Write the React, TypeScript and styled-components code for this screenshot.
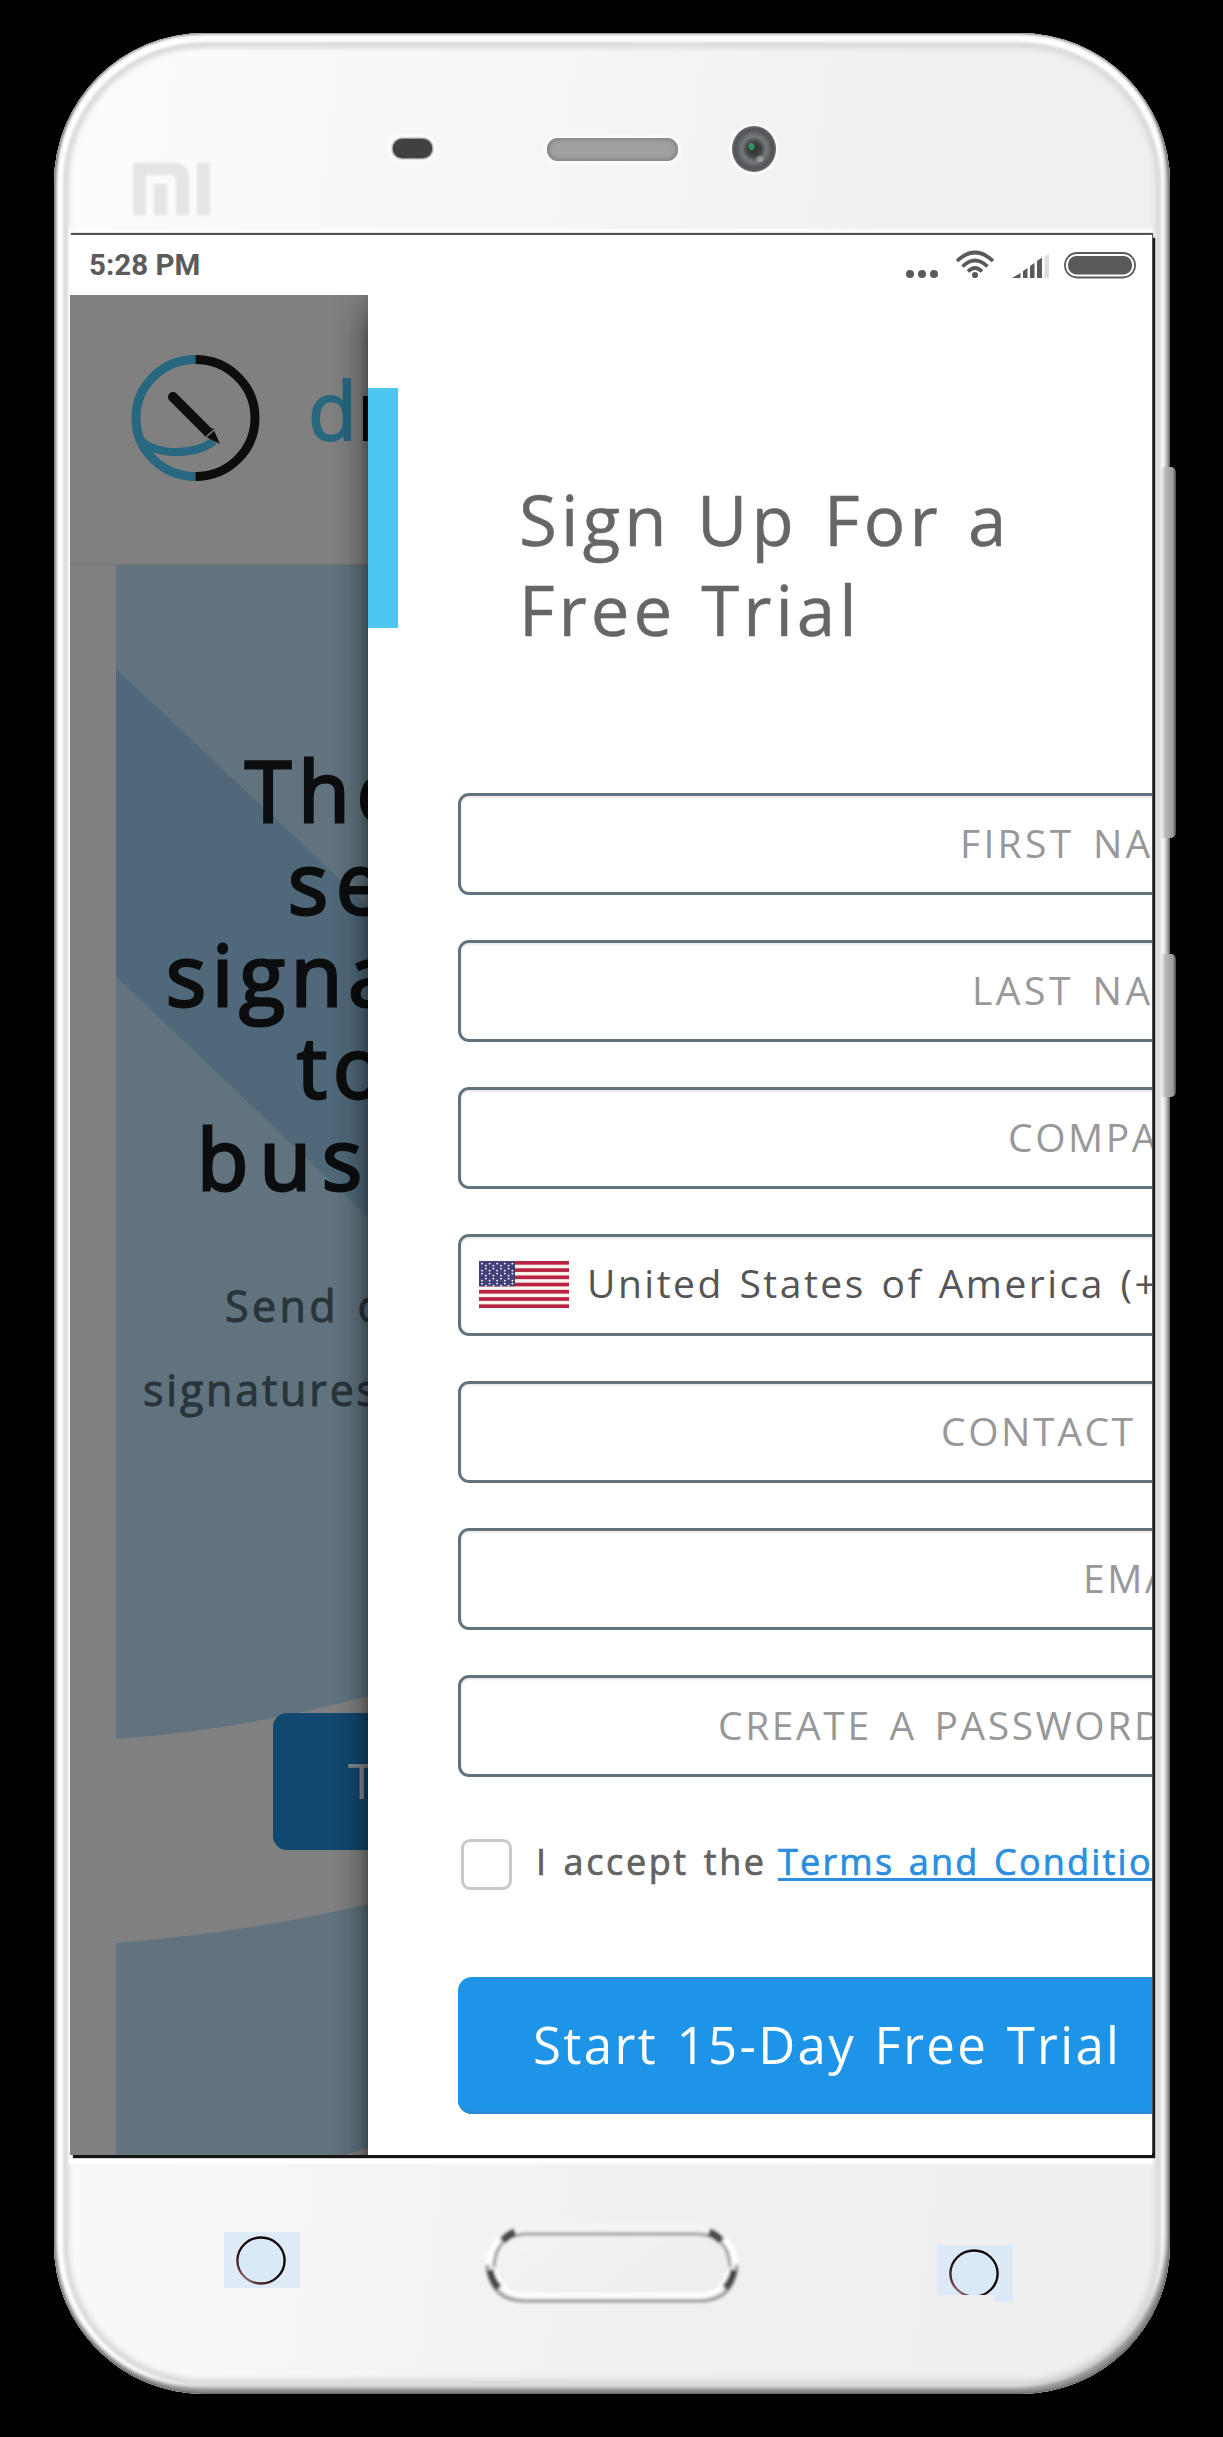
import React from "react";
import styled, { createGlobalStyle } from "styled-components";

const GlobalStyle = createGlobalStyle`
  *, *::before, *::after { box-sizing: border-box; }
  body { margin: 0; background: #000; font-family: "Open Sans", "Noto Sans", sans-serif; }
`;

const Stage = styled.main`
  display: flex;
  justify-content: flex-start;
  width: 1223px;
  height: 2437px;
  padding: 33px 0 0 54px;
  background: #000;
  overflow: hidden;
`;

const Phone = styled.div`
  position: relative;
  display: flex;
  flex-direction: column;
  width: 1116px;
  height: 2361px;
  border-radius: 150px;
  background: linear-gradient(97deg, #fcfcfc 0%, #f6f6f6 35%, #f0f0f0 62%, #efefef 100%);
  box-shadow:
    inset 0 0 3px 1px rgba(70, 70, 70, 0.75),
    inset -5px -8px 4px -1px #939393,
    inset 3px -3px 3px 0 #bdbdbd,
    inset 0 0 3px 9px #fff,
    inset 0 0 5px 15px #dadada;
`;

const SideKey = styled.span<{ $top: number; $height: number }>`
  position: absolute;
  right: -6px;
  top: ${(p) => p.$top}px;
  width: 15px;
  height: ${(p) => p.$height}px;
  border-radius: 0 5px 5px 0;
  background: linear-gradient(90deg, rgba(190, 190, 190, 0), #b4b4b4 35%, #9c9c9c 80%, #444);
`;

const TopBezel = styled.header`
  display: flex;
  align-items: flex-start;
  height: 202px;
  padding: 105px 0 0 79px;
`;

const BrandMark = styled.svg`
  width: 77px;
  height: 52px;
  margin-top: 25px;
  filter: blur(0.8px);
`;

const Sensor = styled.span`
  width: 39px;
  height: 19px;
  margin: 1px 0 0 183px;
  border-radius: 9px;
  background: #414141;
  box-shadow: 0 0 2px 1px #777, 0 0 5px 4px #fff;
`;

const Speaker = styled.span`
  width: 131px;
  height: 23px;
  margin-left: 115px;
  border-radius: 11px;
  background: #a0a0a0;
  box-shadow: inset 0 0 4px 2px #858585, 0 0 4px 2px #fff;
`;

const Camera = styled.svg`
  width: 54px;
  height: 58px;
  margin: -18px 0 0 49px;
`;

const Screen = styled.section`
  display: flex;
  flex-direction: column;
  width: 1082px;
  height: 1920px;
  margin-left: 16px;
  background: #fff;
  box-shadow: 1px -2px 1px 0 #555, 3px 3px 1px 0 #151515, 0 -5px 2px 1px #fff, 0 8px 2px 1px #fff;
`;

const StatusBar = styled.div`
  display: flex;
  align-items: center;
  justify-content: space-between;
  height: 60px;
  padding: 0 16px 0 19px;
`;

const Clock = styled.time`
  font: 700 29.5px/62px Roboto, sans-serif;
  color: #5b5b5b;
`;

const StatusIcons = styled.svg`
  width: 232px;
  height: 60px;
`;

const Split = styled.div`
  display: grid;
  grid-template-columns: 298px 784px;
  height: 1860px;
`;

const Backdrop = styled.div`
  position: relative;
  display: flex;
  flex-direction: column;
  background: #808080;
  overflow: hidden;
  &::after {
    content: "";
    position: absolute;
    top: 0;
    right: 0;
    bottom: 0;
    width: 36px;
    background: linear-gradient(90deg, rgba(0, 0, 0, 0), rgba(0, 0, 0, 0.07) 45%, rgba(0, 0, 0, 0.2) 78%, rgba(0, 0, 0, 0.38));
    mask-image: linear-gradient(180deg, rgba(0, 0, 0, 0.25), #000 44px);
  }
`;

const SiteHeader = styled.div`
  display: flex;
  height: 270px;
  border-bottom: 1px solid #757575;
`;

const SiteLogo = styled.svg`
  flex: none;
  width: 130px;
  height: 128px;
  margin: 59px 0 0 60px;
`;

const Wordmark = styled.span`
  margin: 69px 0 0 48px;
  font-size: 80px;
  line-height: 90px;
  letter-spacing: 0;
  color: #0a0a0a;
  -webkit-text-stroke: 1.8px #0a0a0a;
  white-space: nowrap;
`;

const Teal = styled.span`
  color: #27677f;
  -webkit-text-stroke: 1.8px #27677f;
`;

const Hero = styled.div`
  position: relative;
  flex: 1;
  margin-left: 46px;
`;

const HeroArt = styled.svg`
  position: absolute;
  top: 0;
  left: 0;
  width: 252px;
  height: 1590px;
`;

const Headline = styled.h1`
  position: relative;
  margin: 0;
  padding-top: 179px;
  font-size: 84px;
  line-height: 92px;
  font-weight: 400;
  color: #0c0d0e;
  -webkit-text-stroke: 2.9px #0c0d0e;
  white-space: nowrap;
`;

const Line = styled.span<{ $indent: number; $track: number; $word?: number }>`
  display: block;
  padding-left: ${(p) => p.$indent}px;
  letter-spacing: ${(p) => p.$track}px;
  word-spacing: ${(p) => p.$word ?? 0}px;
`;

const Lead = styled.p`
  position: relative;
  margin: 60px 0 281px;
  font-size: 43px;
  line-height: 84px;
  color: #29343b;
  -webkit-text-stroke: 1px #29343b;
  white-space: nowrap;
`;

const TryButton = styled.div`
  position: relative;
  width: 260px;
  height: 137px;
  margin-left: 157px;
  padding-left: 75px;
  border-radius: 14px;
  background: #11486f;
  font-size: 50px;
  line-height: 134px;
  color: #858b90;
`;

const Drawer = styled.aside`
  display: flex;
  flex-direction: column;
  align-items: flex-start;
  background: #fff;
  overflow: hidden;
`;

const DrawerHead = styled.div`
  display: flex;
  height: 498px;
`;

const Accent = styled.span`
  width: 30px;
  height: 240px;
  margin-top: 93px;
  background: #4dc5f3;
`;

const Title = styled.h2`
  margin: 0;
  padding: 179px 0 0 119px;
  font-size: 69px;
  line-height: 90px;
  font-weight: 400;
  color: #666;
  -webkit-text-stroke: 0.5px #666;
  white-space: nowrap;
`;

const Form = styled.form`
  display: flex;
  flex-direction: column;
  gap: 45px;
  padding-left: 90px;
`;

const Field = styled.div<{ $indent: number; $track?: number }>`
  display: flex;
  align-items: center;
  width: 1250px;
  height: 102px;
  padding: 0 0 2px ${(p) => p.$indent}px;
  border: 3px solid #62737d;
  border-radius: 11px;
  box-shadow: inset 0 2px 2px #e9eaec;
  font-size: 39px;
  line-height: 92px;
  letter-spacing: ${(p) => p.$track ?? 2.6}px;
  word-spacing: 5px;
  color: #989898;
  white-space: nowrap;
`;

const Country = styled.span`
  margin-left: 18px;
  line-height: 88px;
  padding-bottom: 2px;
  letter-spacing: 2.5px;
  word-spacing: 3px;
  color: #555;
`;

const Flag = styled.svg`
  flex: none;
  width: 90px;
  height: 47px;
`;

const Consent = styled.label`
  display: flex;
  height: 51px;
  margin: 62px 0 87px 93px;
  font-size: 36px;
  line-height: 45px;
  letter-spacing: 2.6px;
  word-spacing: 3px;
  color: #626262;
  -webkit-text-stroke: 0.7px currentColor;
  white-space: nowrap;
`;

const Box = styled.span`
  width: 51px;
  height: 51px;
  margin-right: 24px;
  border: 3px solid #c9c9c9;
  border-radius: 9px;
`;

const Prompt = styled.span`
  width: 242px;
`;

const TermsLink = styled.a`
  letter-spacing: 2.2px;
  color: #2b8ede;
  text-decoration: underline;
  text-decoration-thickness: 3px;
  text-underline-offset: 3px;
  text-decoration-skip-ink: none;
`;

const Submit = styled.div`
  width: 1250px;
  height: 137px;
  margin-left: 90px;
  padding-left: 75px;
  border-radius: 14px;
  background: #1e94e9;
  box-shadow: inset 0 -3px 0 #2e8bd6;
  font-size: 51px;
  line-height: 134px;
  color: #fff;
  white-space: nowrap;
`;

const BottomBezel = styled.footer`
  display: flex;
  align-items: flex-start;
  height: 239px;
  padding-left: 170px;
`;

const SoftKey = styled.svg<{ $top: number; $left: number }>`
  width: 76px;
  height: 57px;
  margin: ${(p) => p.$top}px 0 0 ${(p) => p.$left}px;
`;

const HomeKey = styled.svg`
  width: 262px;
  height: 92px;
  margin: 64px 0 0 181px;
`;

const headline = [
  { text: "The", indent: 129, track: 7 },
  { text: "se", indent: 172, track: 8 },
  { text: "signa", indent: 50, track: 6 },
  { text: "to", indent: 181, track: 6 },
  { text: "bus", indent: 81, track: 11 },
];

const stars = Array.from({ length: 45 }, (_, i) => ({
  x: 3 + (i % 9) * 3.8,
  y: 2.6 + Math.floor(i / 9) * 5 + (i % 2 ? 2 : 0),
}));

function UsFlag() {
  return (
    <Flag viewBox="0 0 90 47">
      <rect width="90" height="47" fill="#fbf4ef" />
      {[0, 1, 2, 3, 4, 5, 6].map((i) => (
        <rect key={i} y={i * 7.23} width="90" height="3.7" fill="#b92343" />
      ))}
      <rect width="36" height="25.3" fill="#41407b" />
      {stars.map((s, i) => (
        <circle key={i} cx={s.x} cy={s.y} r="0.95" fill="#fff" />
      ))}
    </Flag>
  );
}

function Ring({ id }: { id: string }) {
  return (
    <>
      <defs>
        <linearGradient id={id} x1="0" y1="1" x2="0.7" y2="0.2">
          <stop offset="0.08" stopColor="#e9c3c6" />
          <stop offset="0.25" stopColor="#5b3036" />
          <stop offset="0.6" stopColor="#12080c" />
        </linearGradient>
      </defs>
      <ellipse cx="37" cy="28.5" rx="23.6" ry="23" fill="#d9eaf6" stroke={`url(#${id})`} strokeWidth="2.4" />
    </>
  );
}

export default function App() {
  return (
    <>
      <GlobalStyle />
      <Stage>
        <Phone>
          <SideKey $top={434} $height={371} />
          <SideKey $top={921} $height={143} />
          <TopBezel>
            <BrandMark viewBox="0 0 77 52" fill="#e5e5e5">
              <path d="M0 0H41Q56 0 56 15V52H43V18Q43 12 37 12H13V52H0Z" />
              <rect x="21" y="21" width="13" height="31" />
              <rect x="64" y="0" width="13" height="52" />
            </BrandMark>
            <Sensor />
            <Speaker />
            <Camera viewBox="0 0 54 58">
              <defs>
                <radialGradient id="lens">
                  <stop offset="0" stopColor="#2c3833" />
                  <stop offset="0.3" stopColor="#3d4141" />
                  <stop offset="0.55" stopColor="#77797b" />
                  <stop offset="0.85" stopColor="#505357" />
                  <stop offset="1" stopColor="#6a6a6a" />
                </radialGradient>
              </defs>
              <ellipse cx="27" cy="29" rx="25" ry="26" fill="#fafafa" />
              <ellipse cx="27" cy="29" rx="22" ry="23" fill="url(#lens)" />
              <ellipse cx="24.5" cy="26.5" rx="3" ry="3.4" fill="#38905e" />
              <ellipse cx="33" cy="39" rx="3.5" ry="3" fill="#a5a6a8" opacity="0.75" />
            </Camera>
          </TopBezel>

          <Screen>
            <StatusBar>
              <Clock>5:28 PM</Clock>
              <StatusIcons viewBox="904 0 232 60" fill="#5a5a5a">
                <ellipse cx="910" cy="39" rx="4" ry="4" />
                <ellipse cx="922" cy="39" rx="4" ry="4" />
                <ellipse cx="934" cy="39" rx="4" ry="4" />
                <g fill="none" stroke="#5a5a5a" strokeWidth="3.6">
                  <path d="M957 26Q975 9 993 26" />
                  <path d="M962.5 31.5Q975 19.5 987.5 31.5" />
                  <path d="M968 36.5Q975 29.5 982 36.5" />
                </g>
                <circle cx="975" cy="40" r="3.1" />
                <path d="M1012 43L1020.5 38V43Z" />
                <path d="M1023 43V36L1027.5 33V43Z" />
                <path d="M1030 43V31L1034.5 28V43Z" />
                <path d="M1037 43V26L1042 22.5V43Z" />
                <path d="M1044.5 43V21.5L1049 18.5V43Z" fill="#dedede" />
                <rect x="1065" y="18" width="70" height="24.5" rx="12" fill="none" stroke="#5a5a5a" strokeWidth="1.8" />
                <rect x="1068" y="21" width="64" height="18.5" rx="8.5" />
              </StatusIcons>
            </StatusBar>

            <Split>
              <Backdrop>
                <SiteHeader>
                  <SiteLogo viewBox="0 0 130 128">
                    <g fill="none" strokeWidth="9">
                      <path d="M65.5 5.5A59.5 58.5 0 0 0 65.5 122.5" stroke="#27677f" />
                      <path d="M65.5 5.5A59.5 58.5 0 0 1 65.5 122.5" stroke="#0d0d0d" />
                      <path d="M8 84Q22 98 46 98T84 87" stroke="#27677f" strokeWidth="8" />
                      <path d="M43 43L78 78" stroke="#0d0d0d" strokeWidth="10" strokeLinecap="round" />
                    </g>
                    <path d="M74 82L83 74L90 90Z" fill="#0d0d0d" />
                    <path d="M76 83L84 76" stroke="#808080" strokeWidth="1.5" />
                  </SiteLogo>
                  <Wordmark>
                    <Teal>d</Teal>r
                  </Wordmark>
                </SiteHeader>
                <Hero>
                  <HeroArt viewBox="0 0 252 1590">
                    <path d="M0 0H252V1131Q130 1164 0 1174Z" fill="#60737e" />
                    <path d="M0 104L252 341V652L0 411Z" fill="#4f697a" />
                    <path d="M0 1378Q130 1368 252 1339V1583Q240 1586 228 1590H0Z" fill="#60737e" />
                  </HeroArt>
                  <Headline>
                    {headline.map((l) => (
                      <Line key={l.text} $indent={l.indent} $track={l.track}>
                        {l.text}
                      </Line>
                    ))}
                  </Headline>
                  <Lead>
                    <Line $indent={109} $track={3.4} $word={4}>Send c</Line>
                    <Line $indent={27} $track={2.8}>signatures</Line>
                  </Lead>
                  <TryButton>T</TryButton>
                </Hero>
              </Backdrop>

              <Drawer>
                <DrawerHead>
                  <Accent />
                  <Title>
                    <Line $indent={2} $track={4.2} $word={4}>Sign Up For a</Line>
                    <Line $indent={2} $track={4} $word={3}>Free Trial</Line>
                  </Title>
                </DrawerHead>
                <Form>
                  <Field $indent={499} $track={3.3}>FIRST NAME</Field>
                  <Field $indent={511} $track={3.5}>LAST NAME</Field>
                  <Field $indent={547}>COMPANY</Field>
                  <Field $indent={18}>
                    <UsFlag />
                    <Country>United States of America (+1)</Country>
                  </Field>
                  <Field $indent={480}>CONTACT</Field>
                  <Field $indent={622}>EMAIL</Field>
                  <Field $indent={257}>CREATE A PASSWORD</Field>
                </Form>
                <Consent>
                  <Box />
                  <Prompt>I accept the</Prompt>
                  <TermsLink>Terms and Conditions</TermsLink>
                </Consent>
                <Submit>
                  <Line $indent={0} $track={2.3} $word={3}>Start 15-Day Free Trial</Line>
                </Submit>
              </Drawer>
            </Split>
          </Screen>

          <BottomBezel>
            <SoftKey viewBox="0 0 76 57" $top={77} $left={0}>
              <rect width="76" height="56" fill="#dfecf8" />
              <Ring id="ringA" />
            </SoftKey>
            <HomeKey viewBox="0 0 262 92">
              <defs>
                <linearGradient id="pill" x1="0" y1="0" x2="1" y2="0.4">
                  <stop offset="0" stopColor="#f5f5f5" />
                  <stop offset="0.4" stopColor="#f1f1f1" />
                  <stop offset="1" stopColor="#eeeeee" />
                </linearGradient>
                <filter id="soft" x="-5%" y="-10%" width="110%" height="120%">
                  <feGaussianBlur stdDeviation="1.8" />
                </filter>
              </defs>
              <g filter="url(#soft)" fill="none">
                <rect x="8" y="9" width="246" height="73" rx="36.5" fill="url(#pill)" stroke="#f4f4f4" strokeWidth="8" />
                <path d="M13 48Q14 17 44 15H218Q248 17 249 48" stroke="#a4a4a4" strokeWidth="3.5" />
                <path d="M15 52Q20 76 44 76H218Q242 76 247 52" stroke="#fff" strokeWidth="4" />
                <path d="M6 46Q10 82 44 82H218Q252 82 256 46" stroke="#a2a2a2" strokeWidth="4" />
                <path d="M8 44Q9 30 18 21" stroke="#fff" strokeWidth="6" />
                <path d="M254 44Q253 30 244 21" stroke="#fff" strokeWidth="6" />
                <path d="M22 22Q26 16 34 13" stroke="#4a4a4a" strokeWidth="8" />
                <path d="M240 22Q236 16 228 13" stroke="#4a4a4a" strokeWidth="8" />
                <path d="M9 51Q11 62 18 69" stroke="#444" strokeWidth="7" />
                <path d="M253 51Q251 62 244 69" stroke="#444" strokeWidth="7" />
              </g>
            </HomeKey>
            <SoftKey viewBox="0 0 76 57" $top={90} $left={194}>
              <defs>
                <clipPath id="cut">
                  <path d="M0 0H76V57H57V50H0Z" />
                </clipPath>
              </defs>
              <g clipPath="url(#cut)">
                <rect width="76" height="57" fill="#dceaf7" />
                <Ring id="ringB" />
              </g>
            </SoftKey>
          </BottomBezel>
        </Phone>
      </Stage>
    </>
  );
}
